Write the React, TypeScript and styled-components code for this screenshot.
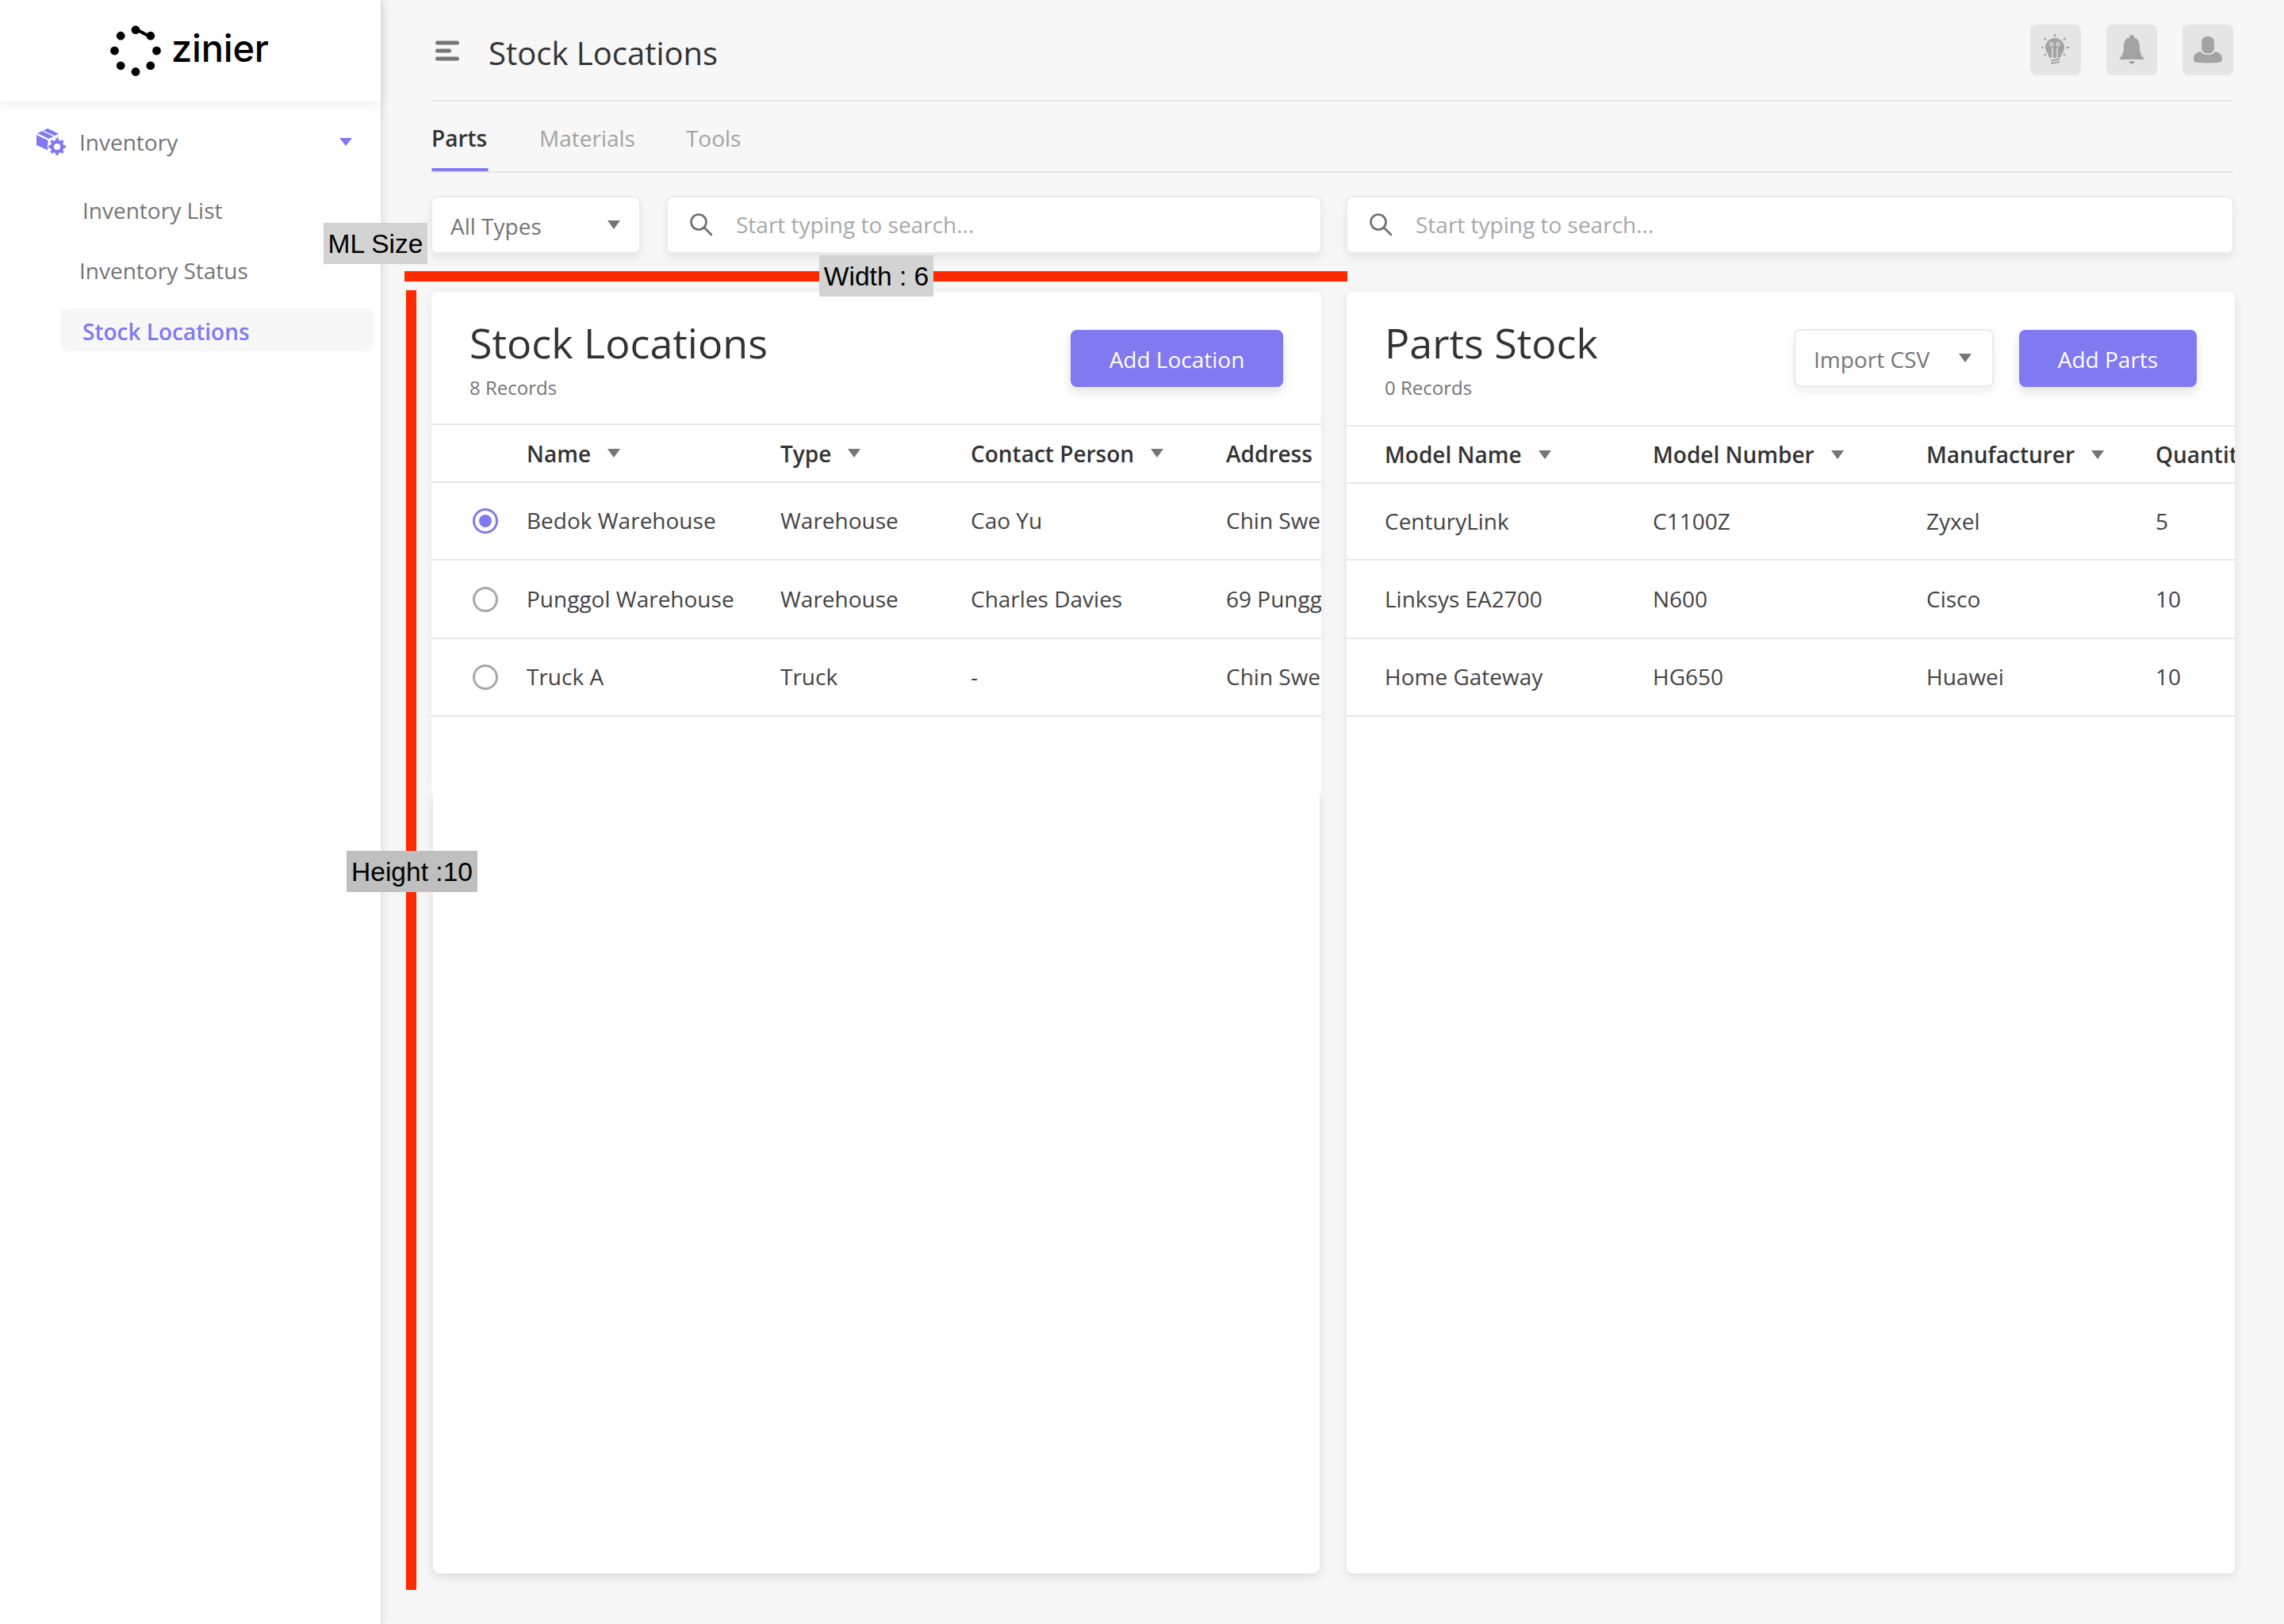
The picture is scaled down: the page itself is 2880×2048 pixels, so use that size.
import React from "react";
import styled, { createGlobalStyle } from "styled-components";

const purple = "#8179f1";
const line = "#e6e6e6";
const sans = `"Open Sans", "Noto Sans", sans-serif`;

const Global = createGlobalStyle`
  html, body { margin: 0; padding: 0; background: #f7f7f7; }
  * { box-sizing: border-box; }
  body { font-family: ${sans}; }
`;

const Page = styled.div`
  position: relative;
  width: 2880px;
  height: 2048px;
  display: flex;
  overflow: hidden;
  background: #f7f7f7;
`;

const Sidebar = styled.aside`
  width: 480px;
  flex: none;
  background: #fff;
  box-shadow: 2px 0 10px rgba(0, 0, 0, 0.12);
  z-index: 2;
`;

const Brand = styled.div`
  height: 128px;
  display: flex;
  align-items: center;
  padding-left: 138px;
  gap: 12px;
  box-shadow: 0 4px 16px rgba(0, 0, 0, 0.08);
`;

const BrandName = styled.span`
  font-family: "Inter", sans-serif;
  font-size: 47px;
  font-weight: 500;
  letter-spacing: -0.2px;
  color: #000;
  line-height: 1;
  position: relative;
  top: -4px;
`;

const Nav = styled.nav`
  display: flex;
  flex-direction: column;
  padding-top: 31px;
`;

const NavGroup = styled.div`
  height: 40px;
  margin-bottom: 38px;
  display: flex;
  align-items: center;
  padding: 0 36px 0 46px;
  font-size: 28px;
  color: #757575;
`;

const NavGroupLabel = styled.span`
  margin-left: 17px;
  flex: 1;
`;

const Caret = styled.i<{ $color?: string; $w?: number; $h?: number }>`
  display: block;
  flex: none;
  width: 0;
  height: 0;
  border-left: ${(p) => (p.$w ?? 16) / 2}px solid transparent;
  border-right: ${(p) => (p.$w ?? 16) / 2}px solid transparent;
  border-top: ${(p) => p.$h ?? 11}px solid ${(p) => p.$color ?? "#757575"};
`;

const NavItem = styled.a<{ $active?: boolean; $indent: number }>`
  display: flex;
  align-items: center;
  height: 55px;
  margin: ${(p) => (p.$active ? "-1px" : "0")} 8px 21px 76px;
  padding-left: ${(p) => p.$indent}px;
  padding-top: ${(p) => (p.$active ? "4px" : "0")};
  border-radius: 10px;
  font-size: 28px;
  color: ${(p) => (p.$active ? purple : "#757575")};
  background: ${(p) => (p.$active ? "#f7f7f7" : "transparent")};
  font-weight: ${(p) => (p.$active ? 600 : 400)};
`;

const Main = styled.main`
  flex: 1;
  min-width: 0;
  display: flex;
  flex-direction: column;
  padding: 0 64px 64px;
`;

const TopBar = styled.header`
  height: 128px;
  flex: none;
  display: flex;
  align-items: center;
  border-bottom: 2px solid ${line};
`;

const Burger = styled.svg`
  width: 32px;
  height: 28px;
  margin-left: 5px;
  margin-right: 35px;
  flex: none;
`;

const PageTitle = styled.h1`
  margin: 0;
  flex: 1;
  font-size: 40px;
  font-weight: 400;
  color: #333;
  position: relative;
  top: 3px;
`;

const IconBox = styled.button`
  width: 64px;
  height: 64px;
  margin-left: 32px;
  padding: 0;
  border: 0;
  border-radius: 8px;
  background: #e5e5e5;
  display: flex;
  align-items: center;
  justify-content: center;
`;

const Tabs = styled.div`
  height: 90px;
  flex: none;
  display: flex;
  align-items: stretch;
  gap: 64px;
  border-bottom: 2px solid ${line};
`;

const Tab = styled.div<{ $active?: boolean }>`
  position: relative;
  min-width: ${(p) => (p.$active ? "72px" : "0")};
  display: flex;
  align-items: center;
  padding-top: 3px;
  font-size: 28px;
  font-weight: ${(p) => (p.$active ? 600 : 400)};
  color: ${(p) => (p.$active ? "#333" : "#a3a3a3")};
  &::after {
    content: "";
    display: ${(p) => (p.$active ? "block" : "none")};
    position: absolute;
    left: 0;
    right: 0;
    bottom: 0;
    height: 4px;
    border-radius: 2px;
    background: ${purple};
  }
`;

const Filters = styled.div`
  flex: none;
  margin: 31px 0 0 1px;
  height: 69px;
  display: grid;
  grid-template-columns: 261px 823px 1114px;
  column-gap: 36px;
`;

const FieldBase = styled.div`
  background: #fff;
  border-radius: 6px;
  box-shadow: 0 0 0 2px #ebebeb, 0 6px 14px rgba(0, 0, 0, 0.09);
  display: flex;
  align-items: center;
  font-size: 28px;
`;

const SelectField = styled(FieldBase)`
  padding: 0 24px 0 23px;
  color: #757575;
  justify-content: space-between;
`;

const SelectText = styled.span`
  position: relative;
  top: 1px;
`;

const SearchField = styled(FieldBase)<{ $shift?: number }>`
  padding: 0 0 1px 27px;
  margin-left: ${(p) => p.$shift ?? 0}px;
  gap: 29px;
  color: #a8a8a8;
`;

const Panels = styled.div`
  flex: 1;
  min-height: 0;
  margin: 50px -2px 0 0;
  display: flex;
  gap: 32px;
`;

const LeftPanel = styled.section`
  flex: 0 0 1122px;
  display: flex;
  flex-direction: column;
  min-width: 0;
`;

const RightPanel = styled.section`
  flex: 1;
  min-width: 0;
  overflow: hidden;
  background: #fff;
  border-radius: 8px;
  box-shadow: 0 4px 14px rgba(0, 0, 0, 0.1);
`;

const PanelTop = styled.div`
  height: 632px;
  flex: none;
  overflow: hidden;
  background: #fff;
  border-radius: 8px 8px 0 0;
  box-shadow: 0 0 12px rgba(0, 0, 0, 0.06);
  clip-path: inset(-30px -30px 0 -30px);
`;

const PanelRest = styled.div`
  flex: 1;
  margin: 0 2px;
  background: #fff;
  border-radius: 0 0 8px 8px;
  box-shadow: 0 4px 14px rgba(0, 0, 0, 0.12);
  clip-path: inset(0 -30px -30px -30px);
`;

const PanelHead = styled.div<{ $h: number }>`
  height: ${(p) => p.$h}px;
  display: flex;
  align-items: flex-start;
  padding: 48px 48px 0;
  border-bottom: 2px solid ${line};
`;

const PanelTitleWrap = styled.div`
  flex: 1;
  min-width: 0;
`;

const PanelTitle = styled.h2`
  margin: -17px 0 0;
  font-size: 52px;
  font-weight: 400;
  line-height: 66px;
  color: #333;
`;

const Records = styled.div`
  margin-top: 8px;
  font-size: 24px;
  line-height: 32px;
  color: #757575;
`;

const PrimaryButton = styled.button<{ $w: number }>`
  height: 72px;
  width: ${(p) => p.$w}px;
  padding: 2px 0 0;
  border: 0;
  border-radius: 8px;
  background: ${purple};
  color: #fff;
  font-family: ${sans};
  font-size: 28px;
  box-shadow: 0 6px 14px rgba(0, 0, 0, 0.12);
`;

const ImportSelect = styled(FieldBase)`
  width: 248px;
  height: 69px;
  margin: 1px 34px 0 0;
  padding: 0 26px 0 23px;
  color: #757575;
  justify-content: space-between;
`;

const Row = styled.div<{ $cols: string; $h: number }>`
  height: ${(p) => p.$h}px;
  display: grid;
  grid-template-columns: ${(p) => p.$cols};
  align-items: center;
  border-bottom: 2px solid ${line};
  white-space: nowrap;
`;

const HeadCell = styled.div`
  display: flex;
  align-items: center;
  gap: 21px;
  font-size: 28px;
  font-weight: 600;
  color: #333;
`;

const Cell = styled.div`
  font-size: 28px;
  color: #444;
  margin-top: -2px;
`;

const RadioCell = styled.div`
  display: flex;
  justify-content: flex-end;
  padding-right: 36px;
`;

const Radio = styled.span<{ $on?: boolean }>`
  width: 32px;
  height: 32px;
  border-radius: 50%;
  border: 3px solid ${(p) => (p.$on ? purple : "#a8a8a8")};
  display: flex;
  align-items: center;
  justify-content: center;
  &::after {
    content: "";
    width: 16px;
    height: 16px;
    border-radius: 50%;
    background: ${(p) => (p.$on ? purple : "transparent")};
  }
`;

/* annotations lying over the page */
const Note = styled.div<{ $x: number; $y: number; $w: number; $bg?: string }>`
  position: absolute;
  left: ${(p) => p.$x}px;
  top: ${(p) => p.$y}px;
  width: ${(p) => p.$w}px;
  height: 52px;
  padding-top: 2px;
  background: ${(p) => p.$bg ?? "#d3d3d3"};
  font-family: "Liberation Sans", Arial, sans-serif;
  font-size: 33.6px;
  color: #000;
  display: flex;
  align-items: center;
  justify-content: center;
  z-index: 6;
`;

const RedBar = styled.div<{ $x: number; $y: number; $w: number; $h: number }>`
  position: absolute;
  left: ${(p) => p.$x}px;
  top: ${(p) => p.$y}px;
  width: ${(p) => p.$w}px;
  height: ${(p) => p.$h}px;
  background: #ff2a00;
  z-index: 5;
`;

const SearchIcon = () => (
  <svg width="30" height="30" viewBox="0 0 30 30" fill="none" stroke="#6e6e6e" strokeWidth="2.6" strokeLinecap="round">
    <circle cx="12" cy="12" r="9.5" />
    <path d="M19 19 L28 28" />
  </svg>
);

const Logo = () => (
  <svg width="66" height="66" viewBox="0 0 66 66" fill="#000">
    <circle cx="33" cy="59.5" r="5.4" />
    <circle cx="14.2" cy="51.8" r="5.4" />
    <circle cx="51.8" cy="51.8" r="5.4" />
    <circle cx="6.5" cy="33" r="5.4" />
    <circle cx="59.5" cy="33" r="5.4" />
    <circle cx="14.2" cy="14.2" r="5.4" />
    <circle cx="33" cy="6.7" r="5.4" />
    <circle cx="51.8" cy="14.2" r="5.4" />
    <path d="M33 6.7 C40 7 44 14 51.8 14.2" fill="none" stroke="#000" strokeWidth="4" />
  </svg>
);

const InventoryIcon = () => (
  <svg width="37" height="34" viewBox="0 0 37 34" fill={purple}>
    <path d="M0 8 L14.500 15 V27.500 L0 21 Z" />
    <path d="M1 6 L7 3.200 L21.500 10 L15.500 13 Z" />
    <path d="M8.500 2.500 L14 0 L28 6.500 L23 9.200 Z" />
    <path d="M17 15.500 L28 10 V22 L17 27 Z" />
    <circle cx="26" cy="23" r="12" fill="#fff" />
    <circle cx="26" cy="23" r="6.300" fill="none" stroke={purple} strokeWidth="4.400" />
    {[0, 45, 90, 135, 180, 225, 270, 315].map((a) => (
      <rect key={a} x="24.200" y="12.200" width="3.600" height="4" transform={`rotate(${a} 26 23)`} />
    ))}
  </svg>
);

const BulbIcon = () => (
  <svg width="36" height="40" viewBox="1 0 36 40" fill="none">
    <path d="M6 17 a12 12 0 1 1 24 0 c0 5 -4 7 -5 13 h-14 c-1 -6 -5 -8 -5 -13 Z" fill="#a3a3a3" />
    <path d="M15 17 V30 M21 17 V30 M14 15 a2 2 0 1 1 .01 0 M22 15 a2 2 0 1 1 .01 0" stroke="#e5e5e5" strokeWidth="1.4" />
    <path d="M13 33.500 L24 31.500 M13 37 L24 35" stroke="#a3a3a3" strokeWidth="2" />
    <path d="M18 0 V3.500 M4.500 5 L7 7.500 M31.500 5 L29 7.500 M0 17 H3.500 M32.500 17 H36 M5 27 L7 25 M31 27 L29 25" stroke="#a3a3a3" strokeWidth="2" />
  </svg>
);

const BellIcon = () => (
  <svg width="32" height="38" viewBox="0 0 32 38" fill="#a3a3a3">
    <path d="M16 0 a2.800 2.800 0 0 1 2.800 3.200 c5 1.400 7.200 5.600 7.200 11 c0 8 1.500 11.500 5.500 15.500 v1.300 H.5 v-1.300 c4 -4 5.500 -7.500 5.500 -15.500 c0 -5.400 2.200 -9.600 7.200 -11 A2.800 2.800 0 0 1 16 0 Z" />
    <path d="M12.500 33 h7 a3.500 3.500 0 0 1 -7 0 Z" />
  </svg>
);

const UserIcon = () => (
  <svg width="36" height="34" viewBox="0 0 36 34" fill="#a3a3a3">
    <path d="M18 0 c4.500 0 8 2.500 8 7 v7 c0 4 -3 7.500 -8 7.500 s-8 -3.500 -8 -7.500 v-7 c0 -4.500 3.500 -7 8 -7 Z" />
    <path d="M9 19 c1.500 2.500 4.500 4 9 4 s7.500 -1.500 9 -4 c5 .7 9 3.500 9 9.500 c0 2.500 -1 3.500 -3 4 c-5 1.300 -25 1.300 -30 0 c-2 -.5 -3 -1.500 -3 -4 c0 -6 4 -8.800 9 -9.500 Z" />
  </svg>
);

const leftCols = "120px 320px 240px 322px 1fr";
const rightCols = "48px 338px 345px 289px 1fr";

const locations = [
  ["Bedok Warehouse", "Warehouse", "Cao Yu", "Chin Swee Road"],
  ["Punggol Warehouse", "Warehouse", "Charles Davies", "69 Punggol Way"],
  ["Truck A", "Truck", "-", "Chin Swee Road"],
];

const parts = [
  ["CenturyLink", "C1100Z", "Zyxel", "5"],
  ["Linksys EA2700", "N600", "Cisco", "10"],
  ["Home Gateway", "HG650", "Huawei", "10"],
];

const leftHeights = [98, 99, 98];
const rightHeights = [97, 99, 98];

export default function App() {
  return (
    <Page>
      <Global />
      <Sidebar>
        <Brand>
          <Logo />
          <BrandName>zinier</BrandName>
        </Brand>
        <Nav>
          <NavGroup>
            <InventoryIcon />
            <NavGroupLabel>Inventory</NavGroupLabel>
            <Caret $color={purple} $w={16} $h={10} />
          </NavGroup>
          <NavItem $indent={28}>Inventory List</NavItem>
          <NavItem $indent={24}>Inventory Status</NavItem>
          <NavItem $indent={28} $active>
            Stock Locations
          </NavItem>
        </Nav>
      </Sidebar>
      <Main>
        <TopBar>
          <Burger viewBox="0 0 32 28" fill="#757575">
            <rect x="0" y="2.500" width="30" height="5" rx="2.500" />
            <rect x="0" y="12.500" width="20" height="5" rx="2.500" />
            <rect x="0" y="22.500" width="30" height="5" rx="2.500" />
          </Burger>
          <PageTitle>Stock Locations</PageTitle>
          <IconBox aria-label="Tips">
            <BulbIcon />
          </IconBox>
          <IconBox aria-label="Notifications">
            <BellIcon />
          </IconBox>
          <IconBox aria-label="Profile">
            <UserIcon />
          </IconBox>
        </TopBar>
        <Tabs>
          <Tab $active>Parts</Tab>
          <Tab>Materials</Tab>
          <Tab>Tools</Tab>
        </Tabs>
        <Filters>
          <SelectField>
            <SelectText>All Types</SelectText>
            <Caret />
          </SelectField>
          <SearchField>
            <SearchIcon />
            Start typing to search...
          </SearchField>
          <SearchField $shift={-2}>
            <SearchIcon />
            Start typing to search...
          </SearchField>
        </Filters>
        <Panels>
          <LeftPanel>
            <PanelTop>
              <PanelHead $h={168}>
                <PanelTitleWrap>
                  <PanelTitle>Stock Locations</PanelTitle>
                  <Records>8 Records</Records>
                </PanelTitleWrap>
                <PrimaryButton $w={268}>Add Location</PrimaryButton>
              </PanelHead>
              <Row $cols={leftCols} $h={73}>
                <span />
                <HeadCell>
                  Name <Caret />
                </HeadCell>
                <HeadCell>
                  Type <Caret />
                </HeadCell>
                <HeadCell>
                  Contact Person <Caret />
                </HeadCell>
                <HeadCell>Address</HeadCell>
              </Row>
              {locations.map((r, i) => (
                <Row key={r[0]} $cols={leftCols} $h={leftHeights[i]}>
                  <RadioCell>
                    <Radio $on={i === 0} />
                  </RadioCell>
                  {r.map((c) => (
                    <Cell key={c}>{c}</Cell>
                  ))}
                </Row>
              ))}
            </PanelTop>
            <PanelRest />
          </LeftPanel>
          <RightPanel>
            <PanelHead $h={170}>
              <PanelTitleWrap>
                <PanelTitle>Parts Stock</PanelTitle>
                <Records>0 Records</Records>
              </PanelTitleWrap>
              <ImportSelect>
                <SelectText>Import CSV</SelectText>
                <Caret />
              </ImportSelect>
              <PrimaryButton $w={224}>Add Parts</PrimaryButton>
            </PanelHead>
            <Row $cols={rightCols} $h={72}>
              <span />
              <HeadCell>
                Model Name <Caret />
              </HeadCell>
              <HeadCell>
                Model Number <Caret />
              </HeadCell>
              <HeadCell>
                Manufacturer <Caret />
              </HeadCell>
              <HeadCell>Quantity</HeadCell>
            </Row>
            {parts.map((r, i) => (
              <Row key={r[0]} $cols={rightCols} $h={rightHeights[i]}>
                <span />
                {r.map((c) => (
                  <Cell key={c}>{c}</Cell>
                ))}
              </Row>
            ))}
          </RightPanel>
        </Panels>
      </Main>
      <Note $x={408} $y={281} $w={131}>
        ML Size
      </Note>
      <RedBar $x={510} $y={342} $w={1189} $h={13} />
      <Note $x={1033} $y={322} $w={144}>
        Width : 6
      </Note>
      <RedBar $x={512} $y={366} $w={13} $h={1639} />
      <Note $x={437} $y={1073} $w={165} $bg="#bfbfbf">
        Height :10
      </Note>
    </Page>
  );
}
